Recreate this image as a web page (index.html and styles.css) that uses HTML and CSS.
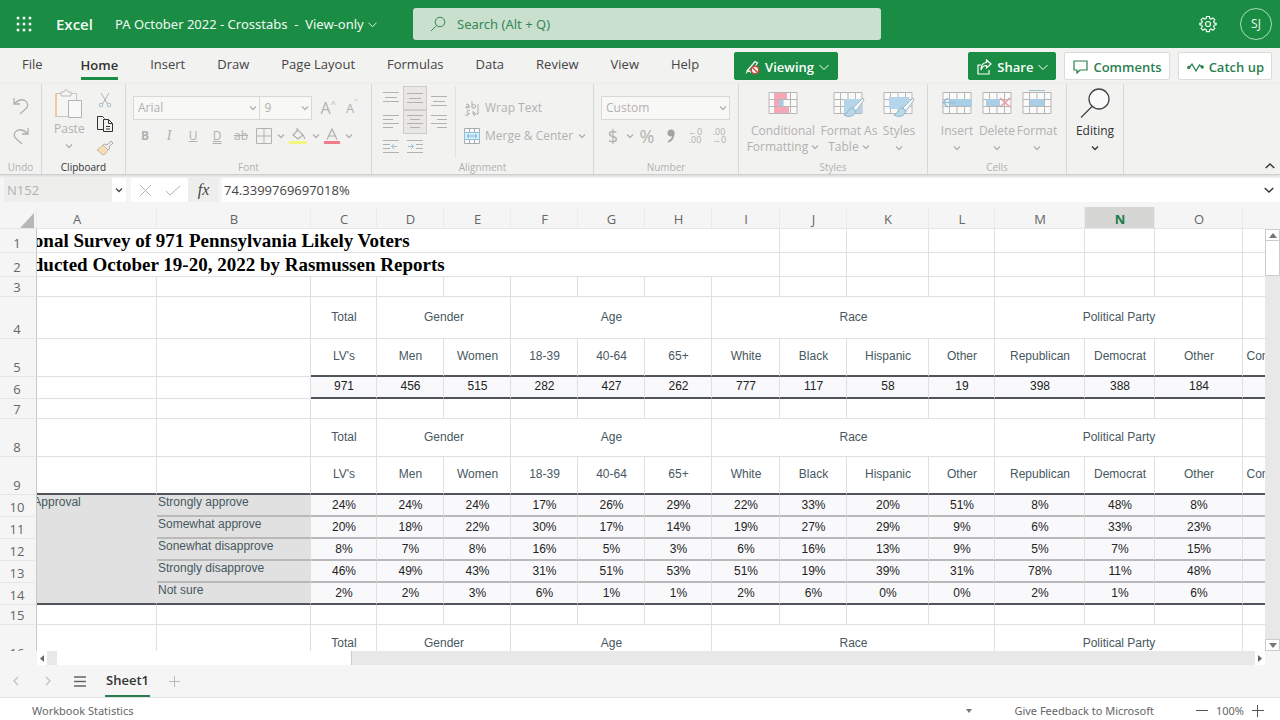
FILE: index.html
```html
<!DOCTYPE html>
<html lang="en">
<head>
<meta charset="utf-8">
<title>PA October 2022 - Crosstabs</title>
<link rel="stylesheet" href="styles.css">
</head>
<body>
<svg class="sprite" aria-hidden="true">
  <symbol id="chev" viewBox="0 0 8 8"><path d="M1 2.500 4 5.500 7 2.500" fill="none" stroke="currentColor" stroke-width="1.300"/></symbol>
  <symbol id="chev-thin" viewBox="0 0 10 10"><path d="M.5 3 5 7.500 9.500 3" fill="none" stroke="currentColor"/></symbol>
  <symbol id="grid" viewBox="0 0 30 26"><path d="M1 2.500H29V23.500H1ZM1 9.500H29M1 16.500H29M7.500 2V24M15 2V24M22.500 2V24" fill="#fafafa" stroke="#b9b7b5"/></symbol>
  <symbol id="brush" viewBox="0 0 24 24"><path d="M21 3 11 13l3 3 8-11Z" fill="#f4f7f9" stroke="#a9b9c4"/><path d="M10 13c-4 0-3 5-8 7 5 3 11 1 12-4Z" fill="#b9d9ea" stroke="#8fb6cb"/></symbol>
</svg>

<header class="topbar">
  <div class="brand">
    <button class="waffle" aria-label="App launcher"><svg width="16" height="16" viewBox="0 0 16 16" fill="currentColor"><circle cx="2" cy="2" r="1.500"/><circle cx="8" cy="2" r="1.500"/><circle cx="14" cy="2" r="1.500"/><circle cx="2" cy="8" r="1.500"/><circle cx="8" cy="8" r="1.500"/><circle cx="14" cy="8" r="1.500"/><circle cx="2" cy="14" r="1.500"/><circle cx="8" cy="14" r="1.500"/><circle cx="14" cy="14" r="1.500"/></svg></button>
    <span class="app">Excel</span>
    <button class="doc">PA October 2022 - Crosstabs&nbsp; -&nbsp; View-only <svg width="9" height="9"><use href="#chev-thin"/></svg></button>
  </div>
  <label class="search">
    <svg width="16" height="16" viewBox="0 0 16 16" fill="none" stroke="currentColor"><circle cx="10" cy="6" r="4.800"/><path d="M6.500 9.500 1 15"/></svg>
    <input type="search" placeholder="Search (Alt + Q)" aria-label="Search">
  </label>
  <div class="account">
    <button aria-label="Settings"><svg width="18" height="18" viewBox="0 0 18 18" fill="none" stroke="currentColor" stroke-width="1.200"><path d="M7.600 1.500h2.800l.4 2 1.300.6 1.800-1.200 1.900 1.900-1.200 1.800.6 1.300 2 .4v1.400l-2 .5-.6 1.300 1.200 1.800-1.900 1.900-1.800-1.200-1.300.6-.4 2H7.600l-.5-2-1.300-.6L4 15.200l-1.900-1.900 1.200-1.800-.6-1.300-1.900-.5V8.300l1.900-.4.600-1.300L2.100 4.800 4 2.900l1.800 1.200 1.300-.6Z"/><circle cx="9" cy="9" r="2.500"/></svg></button>
    <button class="avatar">SJ</button>
  </div>
</header>

<nav class="tabs">
  <button class="file">File</button>
  <button class="active">Home</button>
  <button>Insert</button>
  <button>Draw</button>
  <button>Page Layout</button>
  <button>Formulas</button>
  <button>Data</button>
  <button>Review</button>
  <button>View</button>
  <button>Help</button>
  <button class="pill green viewing"><svg width="15" height="16" viewBox="0 0 15 16"><path d="M2 12 10 2.500l2.500 1.500-6 8Z" fill="none" stroke="#fff" stroke-width="1.200"/><path d="M1 14.500q2-4 5-1" fill="none" stroke="#fff"/><circle cx="10" cy="11" r="3.700" fill="#fff" stroke="#d5473b" stroke-width="1.400"/><path d="m7.500 8.500 5 5" stroke="#d5473b" stroke-width="1.400"/></svg>Viewing<svg width="10" height="10"><use href="#chev-thin"/></svg></button>
  <div class="actions">
    <button class="pill green"><svg width="15" height="16" viewBox="0 0 15 16" fill="none" stroke="currentColor" stroke-width="1.200"><path d="M4 6H1v9h11v-4"/><path d="M9.500 1 14 5 9.500 9V6.500Q5.500 6.500 4 11q0-7 5.500-7.500Z"/></svg>Share<svg width="10" height="10"><use href="#chev-thin"/></svg></button>
    <button class="pill"><svg width="15" height="14" viewBox="0 0 15 14" fill="none" stroke="currentColor" stroke-width="1.200"><path d="M1 1h13v9H7l-3 3v-3H1Z"/></svg>Comments</button>
    <button class="pill"><svg width="17" height="12" viewBox="0 0 17 12" fill="none" stroke="currentColor" stroke-width="1.300"><path d="M2 6.500 5 3l4 7 3.500-6 2.500 2"/><circle cx="1.800" cy="6.500" r="1" fill="currentColor"/><circle cx="15.200" cy="6" r="1" fill="currentColor"/></svg>Catch up</button>
  </div>
</nav>

<section class="ribbon" aria-label="Home ribbon">
  <div class="group g-undo">
    <div class="body undo">
      <button aria-label="Undo"><svg width="16" height="18" viewBox="0 0 16 18" fill="none" stroke="currentColor" stroke-width="1.300"><path d="M1 1v6h6M1.500 6.500Q7 1 12 3.500q5 4 1 8L7 17"/></svg></button>
      <button aria-label="Redo"><svg width="16" height="18" viewBox="0 0 16 18" fill="none" stroke="currentColor" stroke-width="1.300"><path d="M15 1v6H9M14.500 6.500Q9 1 4 3.500q-5 4-1 8L9 17"/></svg></button>
    </div>
    <span class="caption">Undo</span>
  </div>
  <div class="group g-clip">
    <div class="body clip">
      <button class="big"><svg width="30" height="32" viewBox="0 0 30 32"><path d="M1.500 5.500h21v23h-21z" fill="#f6f5f4" stroke="#c9c7c5"/><path d="M2 6v22" stroke="#eecb98" stroke-width="2"/><path d="M7 8V4h3q2-5 4 0h3v4Z" fill="#f6f5f4" stroke="#bbb"/><path d="M14.500 12.500h13v17h-13z" fill="#f8f8f8" stroke="#b5b3b1"/></svg><span>Paste</span><svg class="c" width="8" height="8"><use href="#chev"/></svg></button>
      <div class="stack">
        <button aria-label="Cut"><svg width="14" height="16" viewBox="0 0 14 16" fill="none" stroke="currentColor"><path d="m3 1 6.500 11M11 1 4.500 12"/><circle cx="3" cy="13" r="1.800" stroke="#a9bccb"/><circle cx="11" cy="13" r="1.800" stroke="#a9bccb"/></svg></button>
        <button class="on" aria-label="Copy"><svg width="18" height="18" viewBox="0 0 18 18" fill="none" stroke="#333"><path d="M7 14.500H1.500v-13h5l2 2M7.500 4.500h5l4 4v8h-9zM12.500 4.500v4h4M10 11.500h4M10 14h4"/></svg></button>
        <button aria-label="Format painter"><svg width="18" height="18" viewBox="0 0 18 18"><path d="m11 6 4-4 2 2-4 4 1 1-2 2-5-5 2-1Z" fill="#eee" stroke="#aaa"/><path d="m7 6 5 5q-3 5-5 5L1 11Z" fill="#f6deb3" stroke="#c5b9a5"/></svg></button>
      </div>
    </div>
    <span class="caption on">Clipboard</span>
  </div>
  <div class="group g-font">
    <div class="body rows">
      <div class="row">
        <span class="combo w-font"><select aria-label="Font" disabled><option>Arial</option></select><svg width="8" height="8"><use href="#chev"/></svg></span><span class="combo w-size"><select aria-label="Font size" disabled><option>9</option></select><svg width="8" height="8"><use href="#chev"/></svg></span>
        <button class="grow" aria-label="Increase font size"><span class="a-big">A</span><sup>^</sup></button>
        <button class="grow" aria-label="Decrease font size"><span>A</span><sup>ˇ</sup></button>
      </div>
      <div class="row">
        <button class="t"><b>B</b></button><button class="t serif"><i>I</i></button><button class="t"><u>U</u></button><button class="t dbl">D</button><button class="t"><s>ab</s></button>
        <button class="split" aria-label="Borders"><svg width="16" height="16" viewBox="0 0 16 16"><path d="M.5.5h15v15H.5zM8 .5v15M.5 8h15" fill="none" stroke="#b5b3b1"/></svg><svg width="8" height="8"><use href="#chev"/></svg></button>
        <button class="split" aria-label="Fill color"><svg width="18" height="16" viewBox="0 0 18 16"><path d="m4 7 5-5 5 5-5 4ZM8 4V0M14 7l2 4" fill="none" stroke="#b0aeac" stroke-width="1.200"/><path d="M0 13h18v3H0z" fill="#f6f57c"/></svg><svg width="8" height="8"><use href="#chev"/></svg></button>
        <button class="split" aria-label="Font color"><svg width="16" height="16" viewBox="0 0 16 16"><path d="M3 11.500 8 1l5 10.500M5 8h6" fill="none" stroke="#b0aeac" stroke-width="1.200"/><path d="M0 13h16v3H0z" fill="#ee7c8c"/></svg><svg width="8" height="8"><use href="#chev"/></svg></button>
      </div>
    </div>
    <span class="caption">Font</span>
  </div>
  <div class="group g-align">
    <div class="body align">
      <div class="aligns">
        <button aria-label="Top align"><svg width="16" height="16" viewBox="0 0 16 16"><path d="M0 2.500h16M2 7.500h12M0 11.500h16" stroke="currentColor"/></svg></button>
        <button class="sel" aria-label="Middle align"><svg width="16" height="16" viewBox="0 0 16 16"><path d="M0 3.500h16M2 8.500h12M0 12.500h16" stroke="currentColor"/></svg></button>
        <button aria-label="Bottom align"><svg width="16" height="16" viewBox="0 0 16 16"><path d="M0 6.500h16M2 11.500h12M0 15.500h16" stroke="currentColor"/></svg></button>
        <button aria-label="Align left"><svg width="16" height="16" viewBox="0 0 16 16"><path d="M0 1.500h16M0 5.500h10M0 9.500h16M0 13.500h10" stroke="currentColor"/></svg></button>
        <button class="sel" aria-label="Center"><svg width="16" height="16" viewBox="0 0 16 16"><path d="M0 1.500h16M3 5.500h10M0 9.500h16M3 13.500h10" stroke="currentColor"/></svg></button>
        <button aria-label="Align right"><svg width="16" height="16" viewBox="0 0 16 16"><path d="M0 1.500h16M6 5.500h10M0 9.500h16M6 13.500h10" stroke="currentColor"/></svg></button>
        <button aria-label="Decrease indent"><svg width="16" height="16" viewBox="0 0 16 16"><path d="M0 2.500h16M0 6.500h7M0 10.500h7M0 14.500h16" stroke="currentColor"/><path d="M8 8.500h6M11 6 8.500 8.500 11 11" fill="none" stroke="#9cbfdc"/></svg></button>
        <button aria-label="Increase indent"><svg width="16" height="16" viewBox="0 0 16 16"><path d="M0 2.500h16M9 6.500h7M9 10.500h7M0 14.500h16" stroke="currentColor"/><path d="M1 8.500h6M4 6l2.500 2.500L4 11" fill="none" stroke="#9cbfdc"/></svg></button>
      </div>
      <div class="wraps">
        <button><svg width="16" height="16" viewBox="0 0 16 16"><path d="M2 5q2-2 3 0v3M5 6Q1 6 2 8q2 1 3-1M8 1v7q4 1 4-2 0-2-4-1M6 10.500q-3-1-3 1.500t3 1.500M9 11v3h5V4M11 12l-2 2 2 2M1 15h4" fill="none" stroke="#b0aeac"/></svg>Wrap Text</button>
        <button><svg width="16" height="16" viewBox="0 0 16 16"><path d="M.5.500h15v15H.5zM5.500.500v4M10.500.500v4M5.500 11.500v4M10.500 11.500v4" fill="#f6f8f9" stroke="#a6acb0"/><path d="M.5 4.500h15v7H.5z" fill="#d8edf8" stroke="#8dc2de"/><path d="M3 8h10M5 6 3 8l2 2M11 6l2 2-2 2" fill="none" stroke="#74b2d3"/></svg>Merge &amp; Center<svg width="8" height="8"><use href="#chev"/></svg></button>
      </div>
    </div>
    <span class="caption">Alignment</span>
  </div>
  <div class="group g-num">
    <div class="body rows">
      <div class="row"><span class="combo w-num"><select aria-label="Number format" disabled><option>Custom</option></select><svg width="8" height="8"><use href="#chev"/></svg></span></div>
      <div class="row nums"><button class="sym">$</button><button class="mini" aria-label="Currency list"><svg width="8" height="8"><use href="#chev"/></svg></button><button class="sym">%</button><button class="sym" aria-label="Comma style"><svg width="10" height="14" viewBox="0 0 10 14"><circle cx="5" cy="4" r="3.500" fill="#a5a3a1"/><path d="M7.500 4Q8 10 2 13" fill="none" stroke="#a5a3a1" stroke-width="1.800"/></svg></button><button class="dec"><span>←0</span><span>.00</span></button><button class="dec"><span>.00</span><span>→0</span></button></div>
    </div>
    <span class="caption">Number</span>
  </div>
  <div class="group g-styles">
    <div class="body bigs">
      <button class="big w-cond"><svg width="30" height="28" viewBox="0 0 30 28"><use href="#grid" width="30" height="26"/><path d="M6 3h13v6H6zM6 17h15v6H6z" fill="#f7a6b5"/><path d="M6 10h5v6H6z" fill="#f7a6b5"/><path d="M11 10h4v6h-4z" fill="#a5cbe6"/></svg><span>Conditional</span><span>Formatting <svg width="8" height="8"><use href="#chev"/></svg></span></button>
      <button class="big w-tab"><svg width="32" height="28" viewBox="0 0 32 28"><use href="#grid" width="30" height="26"/><path d="M11 9h18v14H11z" fill="#b5d5eb"/><use href="#brush" x="9" y="5" width="24" height="24"/></svg><span>Format As</span><span>Table <svg width="8" height="8"><use href="#chev"/></svg></span></button>
      <button class="big w-sty"><svg width="32" height="28" viewBox="0 0 32 28"><use href="#grid" width="30" height="26"/><path d="M6 7h20v12H6z" fill="#b5d5eb"/><use href="#brush" x="9" y="5" width="24" height="24"/></svg><span>Styles</span><svg class="c" width="8" height="8"><use href="#chev"/></svg></button>
    </div>
    <span class="caption">Styles</span>
  </div>
  <div class="group g-cells">
    <div class="body bigs">
      <button class="big w-cell"><svg width="30" height="28" viewBox="0 0 30 28"><use href="#grid" width="30" height="26"/><path d="M8 9h22v7H8z" fill="#a9cfe7"/><path d="M14 12.500H1M6 8l-5 4.500L6 17" fill="none" stroke="#94bfdb" stroke-width="1.500"/></svg><span>Insert</span><svg class="c" width="8" height="8"><use href="#chev"/></svg></button>
      <button class="big w-cell"><svg width="30" height="28" viewBox="0 0 30 28"><use href="#grid" width="30" height="26"/><path d="M4 9h14v7H4z" fill="#a9cfe7"/><path d="m18 8 10 9M28 8l-10 9" stroke="#e99ba0" stroke-width="1.500"/></svg><span>Delete</span><svg class="c" width="8" height="8"><use href="#chev"/></svg></button>
      <button class="big w-cell"><svg width="30" height="28" viewBox="0 0 30 28"><use href="#grid" width="30" height="26"/><path d="M8 9h14v7H8z" fill="#a9cfe7"/><path d="M7 .5h16" stroke="#9cbfd4"/></svg><span>Format</span><svg class="c" width="8" height="8"><use href="#chev"/></svg></button>
    </div>
    <span class="caption">Cells</span>
  </div>
  <div class="group g-edit">
    <div class="body bigs">
      <button class="big on"><svg width="30" height="32" viewBox="0 0 30 32" fill="none" stroke="#444" stroke-width="1.300"><circle cx="19" cy="11" r="10" fill="#fafafa"/><path d="M12 18.500 1 29.500"/></svg><span>Editing</span><svg class="c" width="8" height="8"><use href="#chev"/></svg></button>
    </div>
  </div>
  <button class="collapse" aria-label="Collapse ribbon"><svg width="10" height="10" viewBox="0 0 10 10"><path d="M.7 7 5 3l4.300 4" fill="none" stroke="#333" stroke-width="1.400"/></svg></button>
</section>

<section class="formula">
  <div class="namebox"><input aria-label="Name box" value="N152"><button aria-label="Names"><svg width="8" height="8"><use href="#chev"/></svg></button></div>
  <div class="confirm">
    <button aria-label="Cancel"><svg width="13" height="13" viewBox="0 0 13 13"><path d="m1 1 11 11M12 1 1 12" stroke="#b5b3b1"/></svg></button>
    <button aria-label="Enter"><svg width="16" height="13" viewBox="0 0 16 13"><path d="m1 7 4 4L15 2" fill="none" stroke="#b5b3b1"/></svg></button>
  </div>
  <button class="fx">fx</button>
  <input class="entry" aria-label="Formula bar" value="74.3399769697018%">
  <button class="expand" aria-label="Expand formula bar"><svg width="10" height="10" viewBox="0 0 10 10"><path d="M.7 3 5 7l4.300-4" fill="none" stroke="#333" stroke-width="1.400"/></svg></button>
</section>

<main class="sheet">
  <div class="pane">
    <table>
      <colgroup><col class="c-n"><col class="c-a"><col class="c-b"><col class="c-66"><col class="c-67"><col class="c-67"><col class="c-67"><col class="c-67"><col class="c-67"><col class="c-68"><col class="c-67"><col class="c-k"><col class="c-66"><col class="c-m"><col class="c-n2"><col class="c-o"><col class="c-p"></colgroup>
      <thead>
        <tr><th class="corner"><svg width="14" height="15" viewBox="0 0 14 15"><path d="M14 0v15H0Z" fill="#b7b7b7"/></svg></th><th class="ha">A</th><th>B</th><th>C</th><th>D</th><th>E</th><th>F</th><th>G</th><th>H</th><th>I</th><th>J</th><th>K</th><th>L</th><th>M</th><th class="cur">N</th><th>O</th><th></th></tr>
      </thead>
      <tbody>
        <tr class="h24"><th>1</th><td class="title" colspan="9">National Survey of 971 Pennsylvania Likely Voters</td><td></td><td></td><td></td><td></td><td></td><td></td><td></td></tr>
        <tr class="h24"><th>2</th><td class="title" colspan="9">Conducted October 19-20, 2022 by Rasmussen Reports</td><td></td><td></td><td></td><td></td><td></td><td></td><td></td></tr>
        <tr class="h20"><th>3</th><td></td><td></td><td></td><td></td><td></td><td></td><td></td><td></td><td></td><td></td><td></td><td></td><td></td><td></td><td></td><td></td></tr>
        <tr class="h42"><th>4</th><td></td><td></td><td>Total</td><td colspan="2">Gender</td><td colspan="3">Age</td><td colspan="4">Race</td><td colspan="3">Political Party</td><td></td></tr>
        <tr class="h38 dark"><th>5</th><td></td><td></td><td>LV's</td><td>Men</td><td>Women</td><td>18-39</td><td>40-64</td><td>65+</td><td>White</td><td>Black</td><td>Hispanic</td><td>Other</td><td>Republican</td><td>Democrat</td><td>Other</td><td>Conservative</td></tr>
        <tr class="h22 dark val"><th>6</th><td></td><td></td><td>971</td><td>456</td><td>515</td><td>282</td><td>427</td><td>262</td><td>777</td><td>117</td><td>58</td><td>19</td><td>398</td><td>388</td><td>184</td><td></td></tr>
        <tr class="h20"><th>7</th><td></td><td></td><td></td><td></td><td></td><td></td><td></td><td></td><td></td><td></td><td></td><td></td><td></td><td></td><td></td><td></td></tr>
        <tr class="h38"><th>8</th><td></td><td></td><td>Total</td><td colspan="2">Gender</td><td colspan="3">Age</td><td colspan="4">Race</td><td colspan="3">Political Party</td><td></td></tr>
        <tr class="h38 dark full"><th>9</th><td></td><td></td><td>LV's</td><td>Men</td><td>Women</td><td>18-39</td><td>40-64</td><td>65+</td><td>White</td><td>Black</td><td>Hispanic</td><td>Other</td><td>Republican</td><td>Democrat</td><td>Other</td><td>Conservative</td></tr>
        <tr class="h22 data"><th>10</th><td class="topic" rowspan="5">Biden Approval</td><td class="answer">Strongly approve</td><td>24%</td><td>24%</td><td>24%</td><td>17%</td><td>26%</td><td>29%</td><td>22%</td><td>33%</td><td>20%</td><td>51%</td><td>8%</td><td>48%</td><td>8%</td><td></td></tr>
        <tr class="h22 data"><th>11</th><td class="answer">Somewhat approve</td><td>20%</td><td>18%</td><td>22%</td><td>30%</td><td>17%</td><td>14%</td><td>19%</td><td>27%</td><td>29%</td><td>9%</td><td>6%</td><td>33%</td><td>23%</td><td></td></tr>
        <tr class="h22 data"><th>12</th><td class="answer">Sonewhat disapprove</td><td>8%</td><td>7%</td><td>8%</td><td>16%</td><td>5%</td><td>3%</td><td>6%</td><td>16%</td><td>13%</td><td>9%</td><td>5%</td><td>7%</td><td>15%</td><td></td></tr>
        <tr class="h22 data"><th>13</th><td class="answer">Strongly disapprove</td><td>46%</td><td>49%</td><td>43%</td><td>31%</td><td>51%</td><td>53%</td><td>51%</td><td>19%</td><td>39%</td><td>31%</td><td>78%</td><td>11%</td><td>48%</td><td></td></tr>
        <tr class="h22 data last"><th>14</th><td class="answer">Not sure</td><td>2%</td><td>2%</td><td>3%</td><td>6%</td><td>1%</td><td>1%</td><td>2%</td><td>6%</td><td>0%</td><td>0%</td><td>2%</td><td>1%</td><td>6%</td><td></td></tr>
        <tr class="h20"><th>15</th><td></td><td></td><td></td><td></td><td></td><td></td><td></td><td></td><td></td><td></td><td></td><td></td><td></td><td></td><td></td><td></td></tr>
        <tr class="h38"><th>16</th><td></td><td></td><td>Total</td><td colspan="2">Gender</td><td colspan="3">Age</td><td colspan="4">Race</td><td colspan="3">Political Party</td><td></td></tr>
      </tbody>
    </table>
  </div>
  <div class="vscroll">
    <button aria-label="Scroll up"><svg width="8" height="5"><path d="M0 5 4 0l4 5Z" fill="#777"/></svg></button>
    <div class="thumb"></div>
    <button class="end" aria-label="Scroll down"><svg width="8" height="5"><path d="M0 0h8L4 5Z" fill="#777"/></svg></button>
  </div>
</main>
<div class="hscroll">
  <button aria-label="Scroll left"><svg width="4" height="7"><path d="M4 0v7L0 3.500Z" fill="#666"/></svg></button>
  <div class="thumb"></div>
  <button class="end" aria-label="Scroll right"><svg width="4" height="7"><path d="M0 0v7l4-3.500Z" fill="#666"/></svg></button>
</div>

<nav class="sheets">
  <button aria-label="Previous sheet"><svg width="8" height="10" viewBox="0 0 8 10"><path d="M6 1 2 5l4 4" fill="none" stroke="#c4c2c0" stroke-width="1.300"/></svg></button>
  <button aria-label="Next sheet"><svg width="8" height="10" viewBox="0 0 8 10"><path d="m2 1 4 4-4 4" fill="none" stroke="#c4c2c0" stroke-width="1.300"/></svg></button>
  <button aria-label="All sheets"><svg width="12" height="11"><path d="M0 1h12M0 5.500h12M0 10h12" stroke="#666" stroke-width="1.300"/></svg></button>
  <button class="tab">Sheet1</button>
  <button aria-label="New sheet"><svg width="11" height="11"><path d="M0 5.500h11M5.500 0v11" stroke="#bbb"/></svg></button>
</nav>

<footer class="status">
  <button>Workbook Statistics</button>
  <div class="right">
    <button class="drop" aria-label="Status options"><svg width="6" height="4"><path d="M0 0h6L3 4Z" fill="#777"/></svg></button>
    <a href="#">Give Feedback to Microsoft</a>
    <div class="zoom">
      <button aria-label="Zoom out"><svg width="12" height="12"><path d="M0 5.500h12" stroke="#555"/></svg></button>
      <span>100%</span>
      <button aria-label="Zoom in"><svg width="12" height="12"><path d="M0 5.500h12M5.500 0v12" stroke="#555"/></svg></button>
    </div>
  </div>
</footer>
</body>
</html>
```

FILE: styles.css
```css
* { box-sizing: border-box; }
html, body { height: 100%; margin: 0; }
body {
  display: flex;
  flex-direction: column;
  overflow: hidden;
  background: #f5f5f5;
  color: #444;
  font: 13px/18px "Open Sans", "Noto Sans", sans-serif;
}
button, input, select { font: inherit; color: inherit; margin: 0; padding: 0; border: 0; background: none; border-radius: 0; }
button { display: inline-flex; align-items: center; justify-content: center; white-space: nowrap; }
svg { flex: none; }
.sprite { display: none; }

/* Title bar */
.topbar { display: flex; align-items: center; height: 48px; flex: none; background: #1b8c43; color: #f0faf2; }
.brand { display: flex; align-items: center; width: 413px; flex: none; padding-left: 16px; }
.waffle { width: 16px; }
.app { margin-left: 24px; width: 59px; font-size: 15px; font-weight: 600; }
.doc, .search, .status { font-family: "Noto Sans", "Open Sans", sans-serif; }
.doc { gap: 4px; }
.search { display: flex; align-items: center; flex: 0 1 468px; height: 32px; padding: 0 17px; gap: 11px; border-radius: 3px; background: #c9e0cf; color: #37875a; }
.search input { flex: 1; min-width: 0; outline: 0; }
.search input::placeholder { color: #37875a; opacity: 1; }
.account { display: flex; align-items: center; gap: 23px; margin-left: auto; padding-right: 8px; }
.avatar { width: 32px; height: 32px; border: 1px solid #a9dcb8; border-radius: 50%; font-size: 12px; }

/* Ribbon tabs */
.tabs { display: flex; align-items: center; gap: 32px; height: 36px; flex: none; padding: 0 8px 0 22px; background: #f2f2f1; }
.tabs > button { height: 30px; padding-bottom: 2px; border-bottom: 3px solid transparent; }
.tabs > .file { margin-right: 6px; }
.tabs > .active { height: 28px; padding-bottom: 0; border-bottom-color: #1b8c43; font-weight: 600; color: #333; }
.tabs .pill { height: 28px; padding: 2px 7px 0 8px; gap: 5px; border: 1px solid #dcdcda; border-radius: 2px; background: #fff; color: #2b7f4e; font-weight: 600; }
.tabs .green { border-color: #1b8c43; background: #1b8c43; color: #fff; }
.tabs .viewing { margin-left: 3px; padding: 2px 8px 0 10px; }
.actions { display: flex; gap: 8px; margin-left: auto; }

/* Ribbon tools */
.ribbon { display: flex; height: 91px; flex: none; background: #f2f2f1; border-bottom: 1px solid #cfcecd; box-shadow: 0 1px 3px #0002; color: #b3b1af; font-size: 12px; z-index: 1; }
.group { display: flex; flex-direction: column; justify-content: space-between; flex: none; border-right: 1px solid #d9d8d6; }
.g-undo { width: 42px; }
.g-clip { width: 84px; }
.g-font { width: 246px; }
.g-align { width: 222px; }
.g-num { width: 145px; }
.g-styles { width: 189px; }
.g-cells { width: 139px; }
.g-edit { width: 57px; }
.caption { font-size: 10px; line-height: 14px; text-align: center; }
.on { color: #333; }
.body { display: flex; }
.undo { flex-direction: column; align-items: center; gap: 12px; padding-top: 13px; }
.clip { padding: 2px 7px 0 12px; justify-content: space-between; }
.big { flex-direction: column; justify-content: flex-start; line-height: 16px; }
.big > svg:first-child { margin-bottom: 5px; }
.c { margin-top: 5px; }
.stack { display: flex; flex-direction: column; width: 26px; }
.stack button { height: 24px; }
.rows { flex-direction: column; gap: 4px; padding: 12px 7px 0; }
.row { display: flex; align-items: center; height: 24px; }
.combo { display: flex; align-items: center; height: 24px; padding-right: 2px; border: 1px solid #d9d8d6; background: #f8f8f7; }
.combo select { flex: 1; min-width: 0; height: 22px; padding-left: 4px; appearance: none; color: #b3b1af; opacity: 1; }
.w-font { width: 128px; }
.w-size { width: 52px; border-left: 0; }
.w-num { width: 129px; }
.grow { width: 24px; align-items: flex-start; font-size: 13px; }
.grow:first-of-type { margin-left: 4px; }
.a-big { font-size: 16px; }
.grow sup { font-size: 9px; line-height: 10px; }
.t { width: 24px; height: 24px; }
.serif { font-family: "Liberation Serif", serif; font-size: 14px; }
.dbl { text-decoration: underline double; }
.split { width: 34px; height: 24px; gap: 5px; }
.align { padding-top: 2px; }
.aligns { display: grid; grid-template-columns: repeat(3, 24px); width: 84px; padding: 0 4px 0 7px; border-right: 1px solid #e2e1df; }
.aligns button { height: 24px; }
.aligns .sel { border: 1px solid #cfcdcb; background: #e8e7e6; }
.wraps { display: flex; flex-direction: column; align-items: flex-start; gap: 4px; padding: 10px 0 0 8px; }
.wraps button { height: 24px; gap: 5px; }
.sym { width: 24px; font-size: 18px; }
.mini { width: 10px; }
.dec { width: 24px; flex-direction: column; font-size: 9px; line-height: 8px; }
.bigs { justify-content: center; padding-top: 6px; }
.w-cond { width: 72px; }
.w-tab { width: 60px; }
.w-sty { width: 40px; }
.w-cell { width: 40px; }
.g-edit .bigs, .clip { padding-top: 4px; }
.g-edit .big > svg:first-child, .clip .big > svg:first-child { margin-bottom: 3px; }
.clip .big > svg:first-child { margin-bottom: 1px; }
.collapse { margin-left: auto; align-self: flex-end; width: 20px; height: 16px; }

/* Formula bar */
.formula { display: flex; align-items: stretch; flex: none; height: 32px; padding: 3px 0 5px 4px; background: #f5f5f5; }
.namebox { display: flex; width: 122px; background: #fff; color: #b3b1af; }
.namebox input { width: 108px; padding-left: 3px; background: #eeeeed; }
.namebox button { width: 14px; color: #444; }
.confirm { display: flex; width: 57px; margin-left: 5px; background: #fff; }
.confirm button { width: 28px; }
.fx { width: 31px; margin-right: 3px; background: #eeeeed; font: italic 16px "Liberation Serif", serif; }
.entry { flex: 1; min-width: 0; padding-left: 2px; background: #fff; }
.expand { width: 22px; background: #fff; color: #333; }

/* Worksheet */
.sheet { display: flex; flex: 1; min-height: 0; }
.pane { flex: 1; min-width: 0; overflow: hidden; }
table { width: 1320px; table-layout: fixed; border-collapse: separate; border-spacing: 0; background: #fff; font: 12px/16px "Liberation Sans", Arial, sans-serif; color: #47585f; }
.c-n { width: 37px; }
.c-a { width: 120px; }
.c-b { width: 154px; }
.c-66 { width: 66px; }
.c-67 { width: 67px; }
.c-68 { width: 68px; }
.c-k { width: 82px; }
.c-m { width: 90px; }
.c-n2 { width: 70px; }
.c-o { width: 88px; }
.c-p { width: 77px; }
td, th { padding: 0; overflow: hidden; white-space: nowrap; text-align: center; border: 0 solid #e0e0e0; border-width: 0 1px 1px 0; }
td { padding: 0 0 2px 1px; }
th { background: #f5f5f5; color: #666; font: 13px/18px "Open Sans", "Noto Sans", sans-serif; vertical-align: bottom; border-bottom-color: #e6e6e6; }
thead th { height: 22px; padding: 3px 0 0 1px; font-size: 13px; line-height: 18px; border-right-color: #ebebeb; }
thead .ha { padding-right: 40px; }
thead .cur { background: #d6d6d4; color: #1f7a4d; font-weight: 700; }
thead .corner { text-align: right; padding-right: 2px; line-height: 10px; }
tbody th { border-right-color: #c8c8c8; padding-right: 2px; }
.h20 { height: 20px; }
.h22 { height: 22px; }
.h24 { height: 24px; }
.h38 { height: 38px; }
.h42 { height: 42px; }
.title { padding: 0; text-align: left; text-indent: -38px; color: #000; font: 700 19px/22px "Liberation Serif", "Times New Roman", serif; }
.dark td:nth-child(n+4), .full td { border-bottom: 2px solid #50555b; }
.val, .data { color: #222; }
.val td:nth-child(n+4), .data td { background: #f9f9fb; }
.data td { border-bottom: 2px solid #b9b9b9; padding-bottom: 0; }
.data .topic, .data .answer { background: #e1e1e1; color: #47585f; text-align: left; vertical-align: top; line-height: 14px; border-right-color: #e1e1e1; }
.data .topic { text-indent: -38px; }
.data .topic, .data.last td, .data.last .answer { border-bottom-color: #50555b; }
.vscroll { display: flex; flex-direction: column; width: 15px; margin-top: 22px; background: #e8e8e8; }
.vscroll button { height: 12px; flex: none; background: #fff; border: 1px solid #ccc; }
.vscroll .thumb { height: 35px; background: #fff; border: 1px solid #ccc; border-top: 0; }
.end { margin-top: auto; }
.hscroll { display: flex; flex: none; height: 14px; margin: 0 15px 0 37px; background: #e8e8e8; }
.hscroll button { width: 10px; background: #fff; }
.hscroll .thumb { width: 24%; margin-left: 10px; background: #fff; border-right: 1px solid #ccc; }
.hscroll .end { margin: 0 0 0 auto; }

/* Sheet tabs and status bar */
.sheets { display: flex; align-items: stretch; flex: none; height: 33px; border-bottom: 1px solid #e2e2e2; }
.sheets button { width: 32px; }
.sheets button:nth-child(3) { margin-right: 9px; }
.sheets .tab { width: 45px; margin-right: 8px; border-bottom: 2px solid #2a7d50; font-weight: 600; color: #333; }
.status { display: flex; align-items: center; flex: none; height: 22px; padding: 3px 16px 0 32px; background: #fff; color: #666; font-size: 11px; }
.right { display: flex; align-items: center; margin-left: auto; }
.drop { margin-right: 42px; }
.right a { color: inherit; text-decoration: none; }
.zoom { display: flex; align-items: center; gap: 8px; margin-left: 42px; }
```
